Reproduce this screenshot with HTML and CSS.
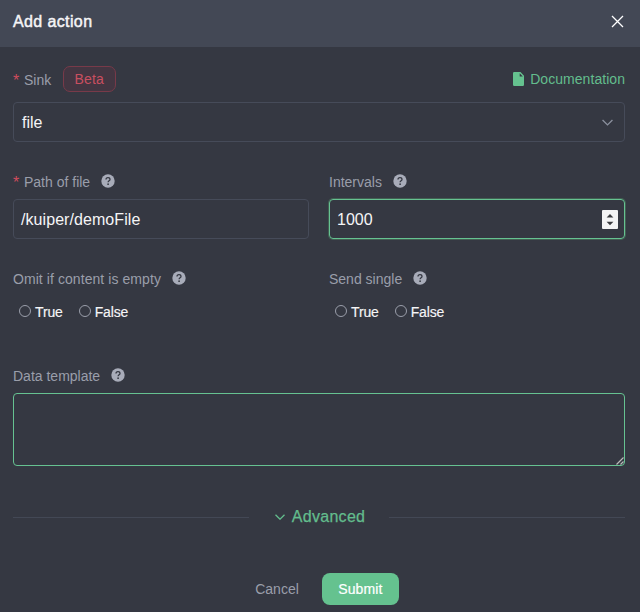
FILE: index.html
```html
<!DOCTYPE html>
<html lang="en">
<head>
<meta charset="utf-8">
<title>Add action</title>
<link rel="stylesheet" href="styles.css">
</head>
<body>
<svg width="0" height="0" class="defs">
  <symbol id="help" viewBox="0 0 14 14">
    <circle cx="7" cy="7" r="6.7" fill="#a8acb9"/>
    <path d="M5 5.600C5 4.300 5.800 3.600 7 3.600s2 .7 2 1.800c0 1.300-1.900 1.500-1.900 2.900" fill="none" stroke="#353842" stroke-width="1.3"/>
    <circle cx="7.1" cy="10.2" r=".85" fill="#353842"/>
  </symbol>
</svg>
<div class="dialog">
  <header class="header">
    <h1 class="title">Add action</h1>
    <svg class="close" viewBox="0 0 13 13"><path d="M1 1l11 11M12 1L1 12"/></svg>
  </header>
  <main class="form">
    <div class="label sink">
      <span class="req">*</span><span>Sink</span><span class="badge">Beta</span>
      <a class="doc"><svg viewBox="0 0 11 14"><path fill-rule="evenodd" d="M1.200 0H7.500L11 3.800v9a1.200 1.200 0 0 1-1.200 1.200H1.200A1.200 1.200 0 0 1 0 12.800V1.200A1.200 1.200 0 0 1 1.200 0zM6.700 1.300V4.600H9.800z"/></svg><span>Documentation</span></a>
    </div>
    <div class="control select"><span>file</span><svg viewBox="0 0 10 6"><path d="M.5.7L5 5.200 9.500.7"/></svg></div>

    <div class="grid fields">
      <div>
        <div class="label"><span class="req">*</span><span>Path of file</span><svg class="help"><use href="#help"/></svg></div>
        <div class="control"><span class="path">/kuiper/demoFile</span></div>
      </div>
      <div>
        <div class="label"><span>Intervals</span><svg class="help"><use href="#help"/></svg></div>
        <div class="control focused"><span>1000</span><svg class="spinner" viewBox="0 0 16 19"><rect width="16" height="19" rx="1" fill="#f3f3f4"/><path d="M4.600 7.500L8 4l3.400 3.500zM4.600 11.700h6.800L8 15.200z" fill="#393a3e"/></svg></div>
      </div>
    </div>

    <div class="grid options">
      <div>
        <div class="label"><span class="omit">Omit if content is empty</span><svg class="help"><use href="#help"/></svg></div>
        <div class="radios"><label><i></i>True</label><label><i></i>False</label></div>
      </div>
      <div>
        <div class="label"><span>Send single</span><svg class="help"><use href="#help"/></svg></div>
        <div class="radios"><label><i></i>True</label><label><i></i>False</label></div>
      </div>
    </div>

    <div class="label template"><span>Data template</span><svg class="help"><use href="#help"/></svg></div>
    <div class="textarea"><svg viewBox="0 0 8 8"><path d="M.5 7.500l7-7M4.500 7.500l3-3"/></svg></div>

    <div class="divider"><span class="toggle"><svg viewBox="0 0 10 6"><path d="M.5.7L5 5.200 9.500.7"/></svg><span>Advanced</span></span></div>
    <footer class="footer"><button class="cancel">Cancel</button><button class="submit">Submit</button></footer>
  </main>
</div>
</body>
</html>
```
FILE: styles.css
```css
* { box-sizing: border-box; }
body { margin: 0; background: #353842; font: 14px/20px "Liberation Sans", Arial, sans-serif; color: #f5f5f7; }
svg { display: block; flex: none; }
.defs { position: absolute; }
.dialog { height: 612px; overflow: hidden; }
.header { height: 47px; background: #434855; padding: 0 16px 4px 13px; display: flex; justify-content: space-between; align-items: center; }
.title { margin: 0; font-size: 16px; font-weight: 400; letter-spacing: .38px; -webkit-text-stroke: .45px; }
.close { width: 13px; height: 13px; fill: none; stroke: #fff; stroke-width: 1.3; }
.form { padding: 18px 15px 0 13px; }
.label { height: 20px; display: flex; align-items: center; color: #9a9eaa; }
.req { width: 11px; color: #d04c5d; font-size: 16px; padding-top: 2px; }
.sink { height: 29px; }
.badge { width: 53px; height: 26px; margin: -2px 0 0 11.500px; border: 1px solid #783a49; border-radius: 7px; background: #433642; color: #c94f60; line-height: 24px; text-align: center; letter-spacing: .15px; }
.doc { margin: -1px 0 0 auto; display: flex; align-items: center; gap: 6px; color: #63bd8d; letter-spacing: .05px; }
.doc svg { width: 11px; height: 14px; fill: #65c28f; }
.control { height: 40px; border: 1px solid #464b59; border-radius: 4px; padding: 0 8px 0 7px; display: flex; align-items: center; justify-content: space-between; font-size: 16px; }
.control span { padding-top: 1px; }
.path { letter-spacing: .07px; }
.select { margin-top: 8px; padding: 0 11px 0 8px; }
.select svg { width: 11px; height: 7px; fill: none; stroke: #8b909e; stroke-width: 1.2; }
.grid { display: grid; grid-template-columns: 1fr 1fr; column-gap: 20px; }
.fields { margin-top: 30px; }
.fields .control { margin-top: 7px; }
.help { width: 14px; height: 14px; margin: -1.500px 0 0 11.200px; }
.omit { letter-spacing: .07px; }
.focused { border-color: #66c291; box-shadow: 0 0 0 1px #416052; padding-right: 6px; }
.spinner { width: 16px; height: 19px; }
.options { margin-top: 30px; }
.radios { display: flex; gap: 16px; padding-left: 6px; margin-top: 13px; height: 20px; letter-spacing: -.15px; -webkit-text-stroke: .15px; }
.radios label { display: flex; align-items: center; }
.radios i { width: 12px; height: 12px; margin: -2px 4px 0 0; border: 1px solid #9a9eaa; border-radius: 50%; }
.template { margin-top: 44px; }
.textarea { margin-top: 7px; height: 73px; border: 1px solid #66c291; border-radius: 4px; display: flex; justify-content: flex-end; align-items: flex-end; }
.textarea svg { width: 8px; height: 8px; fill: none; stroke: #bbb; stroke-width: 1.200; }
.divider { height: 20px; margin-top: 41px; display: flex; align-items: center; font-size: 16px; color: #63bd8d; }
.divider::before, .divider::after { content: ""; flex: 1; height: 1px; background: #434855; }
.toggle { display: flex; align-items: center; gap: 7px; margin: 0 24px 0 26px; letter-spacing: .3px; -webkit-text-stroke: .25px; }
.toggle svg { width: 10px; height: 6px; fill: none; stroke: #63bd8d; stroke-width: 1.3; }
.footer { display: flex; align-items: center; justify-content: center; gap: 23px; margin-top: 46px; padding-left: 16px; }
button { border: 0; padding: 0; background: none; font: inherit; color: #9a9eaa; }
.submit { width: 77px; height: 32px; border-radius: 8px; background: #65c28f; color: #fff; letter-spacing: .1px; -webkit-text-stroke: .2px; }
```
